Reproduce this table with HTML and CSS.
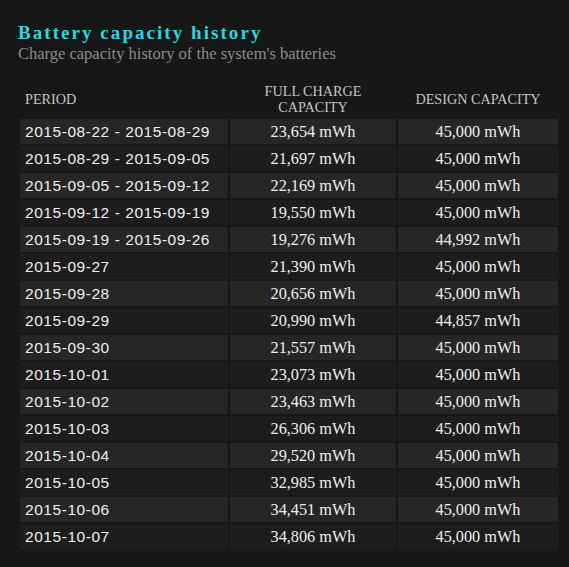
FILE: index.html
```html
<!DOCTYPE html>
<html>
<head>
<meta charset="utf-8">
<link rel="stylesheet" href="styles.css">
</head>
<body>
<div class="report">
  <h2 class="title">Battery capacity history</h2>
  <div class="subtitle">Charge capacity history of the system's batteries</div>
  <table class="history">
    <thead>
      <tr>
        <th class="col-period">PERIOD</th>
        <th class="col-full">FULL CHARGE<br>CAPACITY</th>
        <th class="col-design">DESIGN CAPACITY</th>
      </tr>
    </thead>
    <tbody>
      <tr class="odd"><td class="period">2015-08-22 - 2015-08-29</td><td>23,654 mWh</td><td>45,000 mWh</td></tr>
      <tr class="even"><td class="period">2015-08-29 - 2015-09-05</td><td>21,697 mWh</td><td>45,000 mWh</td></tr>
      <tr class="odd"><td class="period">2015-09-05 - 2015-09-12</td><td>22,169 mWh</td><td>45,000 mWh</td></tr>
      <tr class="even"><td class="period">2015-09-12 - 2015-09-19</td><td>19,550 mWh</td><td>45,000 mWh</td></tr>
      <tr class="odd"><td class="period">2015-09-19 - 2015-09-26</td><td>19,276 mWh</td><td>44,992 mWh</td></tr>
      <tr class="even"><td class="period">2015-09-27</td><td>21,390 mWh</td><td>45,000 mWh</td></tr>
      <tr class="odd"><td class="period">2015-09-28</td><td>20,656 mWh</td><td>45,000 mWh</td></tr>
      <tr class="even"><td class="period">2015-09-29</td><td>20,990 mWh</td><td>44,857 mWh</td></tr>
      <tr class="odd"><td class="period">2015-09-30</td><td>21,557 mWh</td><td>45,000 mWh</td></tr>
      <tr class="even"><td class="period">2015-10-01</td><td>23,073 mWh</td><td>45,000 mWh</td></tr>
      <tr class="odd"><td class="period">2015-10-02</td><td>23,463 mWh</td><td>45,000 mWh</td></tr>
      <tr class="even"><td class="period">2015-10-03</td><td>26,306 mWh</td><td>45,000 mWh</td></tr>
      <tr class="odd"><td class="period">2015-10-04</td><td>29,520 mWh</td><td>45,000 mWh</td></tr>
      <tr class="even"><td class="period">2015-10-05</td><td>32,985 mWh</td><td>45,000 mWh</td></tr>
      <tr class="odd"><td class="period">2015-10-06</td><td>34,451 mWh</td><td>45,000 mWh</td></tr>
      <tr class="even"><td class="period">2015-10-07</td><td>34,806 mWh</td><td>45,000 mWh</td></tr>
    </tbody>
  </table>
</div>
</body>
</html>
```

FILE: styles.css
```css
html, body {
  margin: 0;
  padding: 0;
  background: #171717;
}
.report {
  padding: 22px 0 0 18px;
  font-family: "Liberation Serif", serif;
  color: #e8e8e8;
}
.title {
  margin: 0;
  font-size: 19px;
  line-height: 22px;
  font-weight: bold;
  letter-spacing: 2.05px;
  color: #33d3dd;
}
.subtitle {
  margin: 0;
  font-size: 16.5px;
  line-height: 19px;
  color: #8c8c8c;
}
.history {
  margin-top: 16px;
  border-collapse: separate;
  border-spacing: 2px;
}
.history th {
  font-weight: normal;
  font-size: 14.2px;
  line-height: 16px;
  color: #c4c4c4;
  padding: 2px 4px;
  height: 32px;
  vertical-align: middle;
}
.history th.col-period {
  text-align: left;
  padding-left: 5px;
  width: 199px;
}
.history th.col-full { width: 158px; }
.history th.col-design { width: 152px; }
.history td {
  height: 25px;
  padding: 0 4px;
  font-size: 16.3px;
  color: #eeeeee;
  text-align: center;
  vertical-align: middle;
}
.history td.period {
  text-align: left;
  padding-left: 5px;
  font-family: "Liberation Sans", sans-serif;
  font-size: 15.5px;
  letter-spacing: 0.55px;
}
.history tr.odd td { background: #262626; }
.history tr.even td { background: #1d1d1d; }
```
